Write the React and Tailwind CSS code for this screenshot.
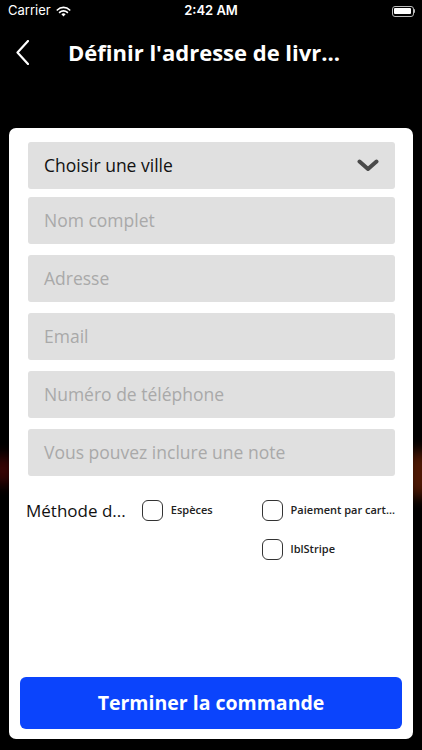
import React from 'react';

const fields = ['Nom complet', 'Adresse', 'Email', 'Numéro de téléphone', 'Vous pouvez inclure une note'];

const Checkbox = ({ label }) => (
  <div className="flex items-center gap-[8px]">
    <div className="w-[21px] h-[21px] rounded-[6px] border-[1.5px] border-[#333]" />
    <span className="text-[11px] font-semibold text-[#222] whitespace-nowrap">{label}</span>
  </div>
);

export default function App() {
  return (
    <div className="relative w-[422px] h-[750px] bg-black overflow-hidden font-['Open_Sans',sans-serif]">
      {/* background glow */}
      <div className="absolute left-[-8px] top-[455px] w-[22px] h-[30px] rounded-full bg-[#6a0808] blur-[7px] opacity-60" />
      <div className="absolute right-[-8px] top-[450px] w-[22px] h-[48px] rounded-full bg-[#7a2606] blur-[7px] opacity-70" />

      {/* status bar */}
      <div className="relative h-[22px] flex items-center justify-between px-[8px] text-white font-['Inter',sans-serif]">
        <div className="flex items-center gap-[5px] text-[13px]">
          <span>Carrier</span>
          <svg width="15" height="11" viewBox="0 0 15 11">
            <path d="M7.5 10.5 L5.4 8.2 A3 3 0 0 1 9.6 8.2 Z" fill="white" />
            <path d="M3.6 6.4 A5.6 5.6 0 0 1 11.4 6.4" stroke="white" strokeWidth="1.7" fill="none" strokeLinecap="round" />
            <path d="M1.3 4 A8.8 8.8 0 0 1 13.7 4" stroke="white" strokeWidth="1.7" fill="none" strokeLinecap="round" />
          </svg>
        </div>
        <span className="absolute left-1/2 -translate-x-1/2 text-[13px] font-semibold">2:42 AM</span>
        <div className="flex items-center mr-[-1px]">
          <div className="w-[22px] h-[11px] rounded-[3px] border border-[#bbb] p-[1.5px]">
            <div className="w-full h-full bg-white rounded-[1px]" />
          </div>
          <div className="w-[1.5px] h-[4px] bg-[#bbb] rounded-r-sm" />
        </div>
      </div>

      {/* nav */}
      <div className="relative h-[60px] flex items-center">
        <svg className="ml-[16px]" width="13" height="25" viewBox="0 0 13 25">
          <path d="M12 1 L1.5 12.5 L12 24" stroke="white" strokeWidth="2.2" fill="none" strokeLinecap="round" strokeLinejoin="round" />
        </svg>
        <h1 className="ml-[39px] text-white text-[22px] font-bold">Définir l'adresse de livr...</h1>
      </div>

      {/* card */}
      <div className="relative mx-[9px] mt-[46px] h-[611px] bg-white rounded-[7px] pl-[19px] pr-[18px] pt-[14px] pb-[10px] flex flex-col">
        <div className="h-[47px] bg-[#e0e0e0] rounded-[3px] flex items-center justify-between pl-[16px] pr-[16px]">
          <span className="text-[17.5px] text-[#111]">Choisir une ville</span>
          <svg width="22" height="13" viewBox="0 0 22 13">
            <path d="M2.5 2.5 L11 10 L19.5 2.5" stroke="#4a4a4a" strokeWidth="4" fill="none" strokeLinecap="round" strokeLinejoin="round" />
          </svg>
        </div>
        <div className="mt-[8px] flex flex-col gap-[11px]">
          {fields.map((f) => (
            <div key={f} className="h-[47px] bg-[#e0e0e0] rounded-[3px] flex items-center pl-[16px]">
              <span className="text-[17.5px] text-[#a9a9a9]">{f}</span>
            </div>
          ))}
        </div>

        {/* payment method */}
        <div className="mt-[24px] flex -ml-[2px]">
          <div className="w-[117px] h-[21px] flex items-center">
            <span className="text-[17px] font-medium text-[#111]">Méthode d...</span>
          </div>
          <div className="w-[121px]">
            <Checkbox label="Espèces" />
          </div>
          <div className="flex flex-col gap-[18px]">
            <Checkbox label="Paiement par cart..." />
            <Checkbox label="lblStripe" />
          </div>
        </div>

        <button className="mt-auto -ml-[8px] -mr-[7px] h-[52px] bg-[#0b44fc] rounded-[6px] text-white text-[19.5px] font-bold">
          Terminer la commande
        </button>
      </div>
    </div>
  );
}
